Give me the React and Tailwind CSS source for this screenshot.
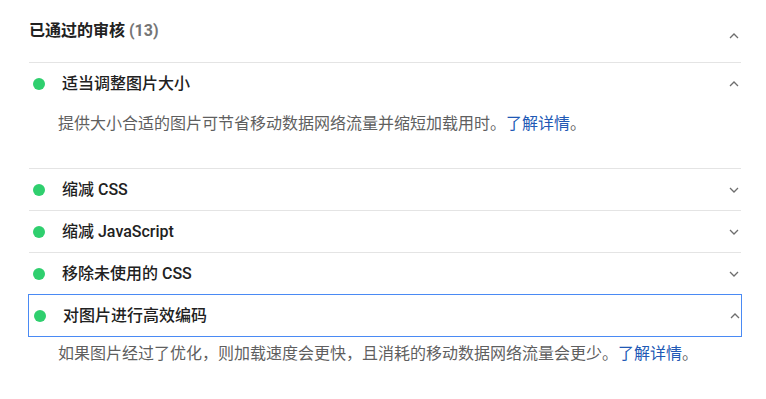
import React from "react";

const FONT = { fontFamily: 'Roboto, "Noto Sans CJK SC", sans-serif' };

function Chevron({ up }) {
  return (
    <svg width="10" height="6" viewBox="0 0 10 6" className="shrink-0">
      <path
        d={up ? "M1 5 L5 1 L9 5" : "M1 1 L5 5 L9 1"}
        fill="none"
        stroke="#6e6e6e"
        strokeWidth="1.3"
      />
    </svg>
  );
}

function Dot() {
  return <span className="w-[12px] h-[12px] rounded-full bg-[#2fcf6e] shrink-0" />;
}

function Row({ title, up, focused }) {
  return (
    <div
      className={
        focused
          ? "-mx-px h-[43px] border border-[#4a8af4] flex items-center pl-[5px] pr-[1px]"
          : "border-t border-[#e4e4e4] h-[42px] flex items-center pl-[4px] pr-[2px]"
      }
    >
      <Dot />
      <span className="ml-[17px] text-[16px] font-medium text-[#212121] leading-none">{title}</span>
      <span className="ml-auto">
        <Chevron up={up} />
      </span>
    </div>
  );
}

export default function App() {
  return (
    <div className="w-[766px] h-[399px] bg-white pl-[29px] pr-[25px]" style={FONT}>
      <div className="h-[62px] flex items-center pr-[2px]">
        <span className="text-[16px] font-bold text-[#212121]">
          已通过的审核 <span className="text-[#757575]">(13)</span>
        </span>
        <span className="ml-auto mt-[9px]">
          <Chevron up />
        </span>
      </div>
      <Row title="适当调整图片大小" up />
      <div className="pl-[29px] pt-[8px] h-[64px] text-[16px] leading-[24px] text-[#5f5f5f]">
        提供大小合适的图片可节省移动数据网络流量并缩短加载用时。
        <span className="text-[#2159b5]">了解详情</span>。
      </div>
      <Row title="缩减 CSS" />
      <Row title="缩减 JavaScript" />
      <Row title="移除未使用的 CSS" />
      <Row title="对图片进行高效编码" up focused />
      <div className="pl-[29px] pt-[5px] text-[16px] leading-[24px] text-[#5f5f5f]">
        如果图片经过了优化，则加载速度会更快，且消耗的移动数据网络流量会更少。
        <span className="text-[#2159b5]">了解详情</span>。
      </div>
    </div>
  );
}
